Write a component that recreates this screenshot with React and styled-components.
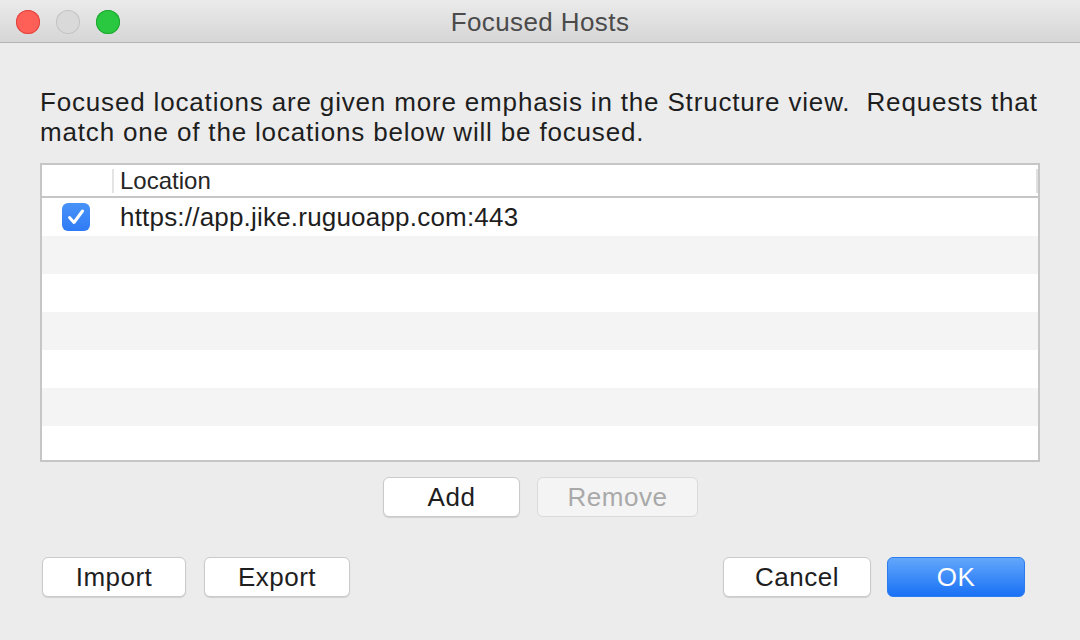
import styled, { createGlobalStyle } from "styled-components";

const GlobalStyle = createGlobalStyle`
  html, body {
    margin: 0;
    padding: 0;
    background: #ececec;
  }
  body {
    font-family: "Liberation Sans", Arial, sans-serif;
    color: #222;
    -webkit-font-smoothing: antialiased;
  }
`;

const rows = [
  { id: 1, checked: true, location: "https://app.jike.ruguoapp.com:443" },
  { id: 2 },
  { id: 3 },
  { id: 4 },
  { id: 5 },
  { id: 6 },
  { id: 7 },
];

export default function App() {
  return (
    <>
      <GlobalStyle />
      <Window>
        <TitleBar>
          <Lights>
            <Light color="#fe5f57" edge="#e0443e" />
            <Light color="#d9d9d9" edge="#c3c3c3" />
            <Light color="#2ac840" edge="#1ea632" />
          </Lights>
          <Title>Focused Hosts</Title>
        </TitleBar>
        <Body>
          <Intro>
            Focused locations are given more emphasis in the Structure view.&nbsp;
            Requests that match one of the locations below will be focused.
          </Intro>
          <Table>
            <HeaderRow>
              <CheckCell />
              <HeaderCell>Location</HeaderCell>
              <Grip />
            </HeaderRow>
            {rows.map((row, i) => (
              <Row key={row.id} $alt={i % 2 === 1}>
                <CheckCell>
                  {row.checked && (
                    <Checkbox>
                      <svg width="28" height="28" viewBox="0 0 28 28">
                        <path
                          d="M7.5 14.5l4.5 5L20.5 8"
                          fill="none"
                          stroke="#fff"
                          strokeWidth="3"
                          strokeLinecap="round"
                          strokeLinejoin="round"
                        />
                      </svg>
                    </Checkbox>
                  )}
                </CheckCell>
                <Cell>{row.location}</Cell>
              </Row>
            ))}
          </Table>
          <TableActions>
            <Button $w={137}>Add</Button>
            <Button $w={161} disabled>
              Remove
            </Button>
          </TableActions>
          <Footer>
            <Group $gap={18}>
              <Button $w={144}>Import</Button>
              <Button $w={146}>Export</Button>
            </Group>
            <Group $gap={16}>
              <Button $w={148}>Cancel</Button>
              <Button $w={138} $primary>
                OK
              </Button>
            </Group>
          </Footer>
        </Body>
      </Window>
    </>
  );
}

const Window = styled.div`
  width: 1080px;
  height: 640px;
  display: flex;
  flex-direction: column;
  background: #ececec;
  overflow: hidden;
`;

const TitleBar = styled.div`
  height: 43px;
  flex-shrink: 0;
  display: flex;
  align-items: center;
  justify-content: center;
  position: relative;
  background: linear-gradient(#ebebeb, #d6d6d6);
  border-bottom: 1px solid #b4b4b4;
  box-sizing: border-box;
`;

const Lights = styled.div`
  position: absolute;
  left: 16px;
  top: 10px;
  display: flex;
  gap: 16px;
`;

const Light = styled.span`
  width: 24px;
  height: 24px;
  border-radius: 50%;
  background: ${(p) => p.color};
  box-shadow: inset 0 0 0 1px ${(p) => p.edge};
`;

const Title = styled.div`
  font-size: 26px;
  letter-spacing: 0.4px;
  color: #4b4b4b;
  margin-top: 2px;
`;

const Body = styled.div`
  flex: 1;
  display: flex;
  flex-direction: column;
  padding: 44px 40px 0 40px;
`;

const Intro = styled.p`
  margin: 0 0 16px 0;
  font-size: 26px;
  line-height: 30px;
  letter-spacing: 0.83px;
  color: #1e1e1e;
`;

const Table = styled.div`
  width: 1000px;
  height: 299px;
  flex-shrink: 0;
  box-sizing: border-box;
  border: 2px solid #c6c6c6;
  background: #fff;
  overflow: hidden;
`;

const HeaderRow = styled.div`
  height: 33px;
  box-sizing: border-box;
  display: flex;
  align-items: center;
  border-bottom: 2px solid #c6c6c6;
`;

const HeaderCell = styled.div`
  flex: 1;
  height: 24px;
  display: flex;
  align-items: center;
  padding-left: 6px;
  font-size: 24px;
  color: #262626;
  border-left: 2px solid #e4e4e4;
`;

const Grip = styled.span`
  width: 2px;
  height: 24px;
  background: #e0e0e0;
`;

const Row = styled.div`
  height: 38px;
  display: flex;
  align-items: center;
  background: ${(p) => (p.$alt ? "#f4f4f4" : "#fff")};
`;

const CheckCell = styled.div`
  width: 70px;
  flex-shrink: 0;
  display: flex;
  justify-content: center;
`;

const Checkbox = styled.span`
  width: 28px;
  height: 28px;
  margin-right: 2px;
  border-radius: 6px;
  background: linear-gradient(#4893f8, #2f7bf6);
  display: flex;
  align-items: center;
  justify-content: center;
`;

const Cell = styled.div`
  padding-left: 8px;
  font-size: 26px;
  letter-spacing: 0.2px;
  color: #1e1e1e;
`;

const TableActions = styled.div`
  display: flex;
  justify-content: center;
  gap: 17px;
  margin-top: 15px;
  padding-left: 1px;
`;

const Footer = styled.div`
  display: flex;
  justify-content: space-between;
  margin-top: 40px;
  padding: 0 15px 0 2px;
`;

const Group = styled.div`
  display: flex;
  gap: ${(p) => p.$gap}px;
`;

const Button = styled.button`
  width: ${(p) => p.$w}px;
  height: 40px;
  box-sizing: border-box;
  border-radius: 6px;
  font-family: inherit;
  font-size: 26px;
  letter-spacing: 0.5px;
  padding: 0;
  cursor: default;
  color: ${(p) => (p.$primary ? "#fff" : "#1e1e1e")};
  background: ${(p) =>
    p.$primary ? "linear-gradient(#62a7fb, #1a71f5)" : "#fff"};
  border: 1px solid ${(p) => (p.$primary ? "#2b7cf0" : "#cacaca")};
  box-shadow: ${(p) => (p.$primary ? "none" : "0 1px 1px rgba(0,0,0,0.12)")};

  &:disabled {
    color: #a9a9a9;
    background: #f4f4f4;
    border-color: #dadada;
    box-shadow: none;
  }
`;
